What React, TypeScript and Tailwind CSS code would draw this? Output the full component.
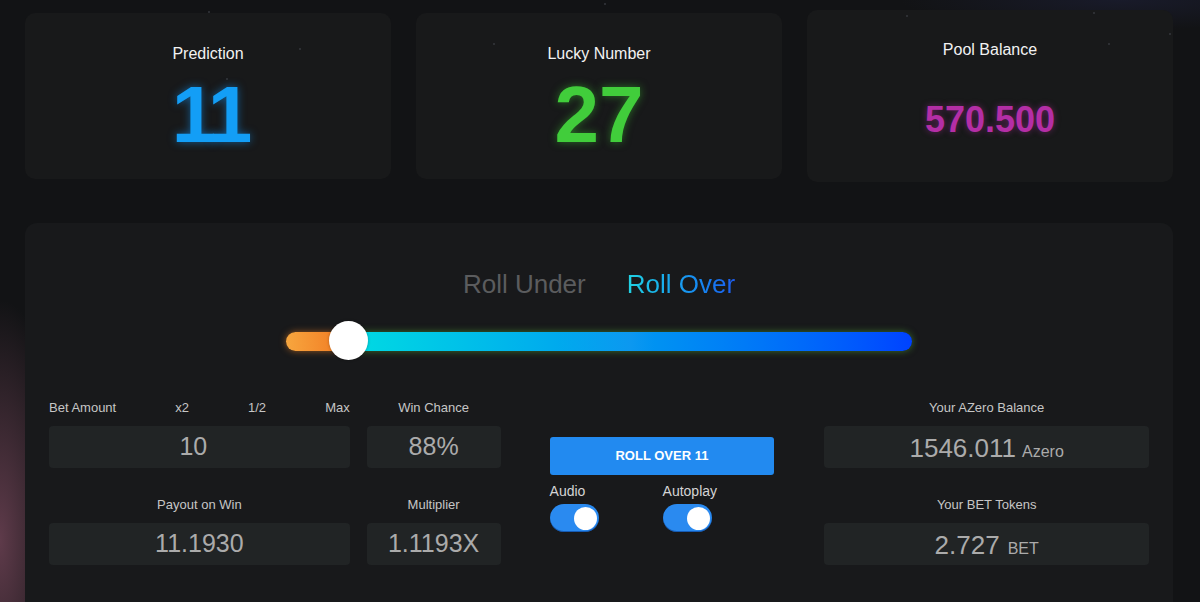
import React from "react";

const font = "font-['Liberation_Sans','Helvetica_Neue',Arial,sans-serif]";

function Stat({ title, value, valueClass, tall }: { title: string; value: string; valueClass: string; tall?: boolean }) {
  return (
    <div
      className={`flex flex-col items-center rounded-[10px] bg-[#18191a] ${tall ? "-my-[3px] pt-[28px]" : "pt-[29px]"}`}
    >
      <div className="text-[16px] leading-[24px] text-[#f2f2f2]">{title}</div>
      <div className={valueClass}>{value}</div>
    </div>
  );
}

function Box({ children, className = "" }: { children: React.ReactNode; className?: string }) {
  return (
    <div className={`flex h-[42px] items-center justify-center rounded-[4px] bg-[#212425] text-[#ababab] ${className}`}>
      {children}
    </div>
  );
}

function Toggle() {
  return (
    <div className="flex h-[28px] w-[49px] items-center justify-end rounded-full bg-[#2a8af0] pr-[2px] shadow-[inset_0_-1px_0_rgba(10,60,140,0.6)]">
      <div className="h-[23px] w-[23px] rounded-full bg-white" />
    </div>
  );
}

const stars: [number, number][] = [
  [208, 11],
  [299, 48],
  [226, 78],
  [493, 43],
  [604, 3],
  [906, 15],
  [1108, 43],
  [1169, 33],
  [1093, 12],
];

export default function App() {
  return (
    <div
      className={`${font} relative h-[602px] w-[1200px] overflow-hidden bg-[#121315] bg-[radial-gradient(ellipse_70px_240px_at_0px_540px,rgba(120,72,92,0.75),transparent),radial-gradient(ellipse_220px_30px_at_1120px_0px,rgba(40,44,90,0.3),transparent)] px-[25px] pt-[13px]`}
    >
      <div className="relative grid h-[166px] w-[1148px] grid-cols-3 gap-[25px]">
        <Stat
          title="Prediction"
          value="11"
          valueClass="mt-[9px] pl-[4px] text-[80px] font-bold leading-none tracking-[-4px] text-[#139ef6] [text-shadow:0_0_8px_rgba(20,150,245,0.55)]"
        />
        <Stat
          title="Lucky Number"
          value="27"
          valueClass="mt-[9px] text-[80px] font-bold leading-none text-[#41cd3b] [text-shadow:0_0_8px_rgba(60,200,50,0.5)]"
        />
        <Stat
          tall
          title="Pool Balance"
          value="570.500"
          valueClass="mt-[40px] text-[36px] font-bold leading-none text-[#b42ea6] [text-shadow:0_0_6px_rgba(180,46,166,0.5)]"
        />
      </div>

      <div className="relative mt-[44px] h-[400px] w-[1148px] rounded-t-[12px] bg-[#18191b] pt-[48px]">
        <div className="flex h-[26px] items-center justify-center gap-[41px] text-[26px] leading-none">
          <span className="text-[#5b5c5e]">Roll Under</span>
          <span className="bg-gradient-to-r from-[#22d2e2] via-[#1a9cf0] to-[#1e5cf0] bg-clip-text text-transparent">
            Roll Over
          </span>
        </div>

        <div className="relative mx-auto mt-[24px] flex h-[40px] w-[626px] items-center">
          <div className="flex h-[19px] w-full">
            <div className="w-[63px] rounded-l-full bg-gradient-to-r from-[#f7a63e] to-[#f0761e] shadow-[0_0_7px_rgba(255,140,40,0.55)]" />
            <div className="flex-1 rounded-r-full bg-gradient-to-r from-[#00dbe2] via-[#0c98f0] to-[#0042ff] shadow-[0_0_7px_rgba(90,200,60,0.5)]" />
          </div>
          <div className="absolute left-[43px] top-0 h-[39px] w-[39px] rounded-full bg-white shadow-[0_0_3px_rgba(0,0,0,0.3)]" />
        </div>

        <div className="mt-[39px] flex px-[24px]">
          <div className="w-[301px]">
            <div className="flex h-[16px] items-center text-[13px] text-[#c6c6c6]">
              <span>Bet Amount</span>
              <span className="ml-[59px]">x2</span>
              <span className="ml-[59px]">1/2</span>
              <span className="ml-auto">Max</span>
            </div>
            <Box className="mt-[10px] pr-[12px] text-[25px]">10</Box>
            <div className="mt-[29px] flex h-[16px] items-center justify-center text-[13px] text-[#c6c6c6]">
              Payout on Win
            </div>
            <Box className="mt-[10px] text-[25px]">11.1930</Box>
          </div>

          <div className="ml-[17px] w-[134px]">
            <div className="flex h-[16px] items-center justify-center text-[13px] text-[#c6c6c6]">Win Chance</div>
            <Box className="mt-[10px] text-[25px]">88%</Box>
            <div className="mt-[29px] flex h-[16px] items-center justify-center text-[13px] text-[#c6c6c6]">
              Multiplier
            </div>
            <Box className="mt-[10px] text-[25px]">1.1193X</Box>
          </div>

          <div className="ml-[49px] w-[225px] pt-[37px]">
            <div className="flex h-[38px] items-center justify-center rounded-[3px] bg-[#228af0] text-[13px] font-bold text-white">
              ROLL OVER 11
            </div>
            <div className="mt-[8px] flex">
              <div className="w-[113px]">
                <div className="h-[16px] text-[14px] leading-[16px] text-[#d4d4d4]">Audio</div>
                <div className="mt-[5px]">
                  <Toggle />
                </div>
              </div>
              <div>
                <div className="h-[16px] text-[14px] leading-[16px] text-[#d4d4d4]">Autoplay</div>
                <div className="mt-[5px]">
                  <Toggle />
                </div>
              </div>
            </div>
          </div>

          <div className="ml-[50px] w-[325px]">
            <div className="flex h-[16px] items-center justify-center text-[13px] text-[#c6c6c6]">
              Your AZero Balance
            </div>
            <Box className="mt-[10px]">
              <div className="flex items-baseline pt-[3px]">
                <span className="text-[26px]">1546.011</span>
                <span className="ml-[6px] text-[16px]">Azero</span>
              </div>
            </Box>
            <div className="mt-[29px] flex h-[16px] items-center justify-center text-[13px] text-[#c6c6c6]">
              Your BET Tokens
            </div>
            <Box className="mt-[10px]">
              <div className="flex items-baseline pt-[3px]">
                <span className="text-[26px]">2.727</span>
                <span className="ml-[8px] text-[16px]">BET</span>
              </div>
            </Box>
          </div>
        </div>
      </div>

      {stars.map(([x, y], i) => (
        <div
          key={i}
          className="absolute h-[2px] w-[2px] rounded-full bg-[#34373d]"
          style={{ left: x, top: y }}
        />
      ))}
    </div>
  );
}
